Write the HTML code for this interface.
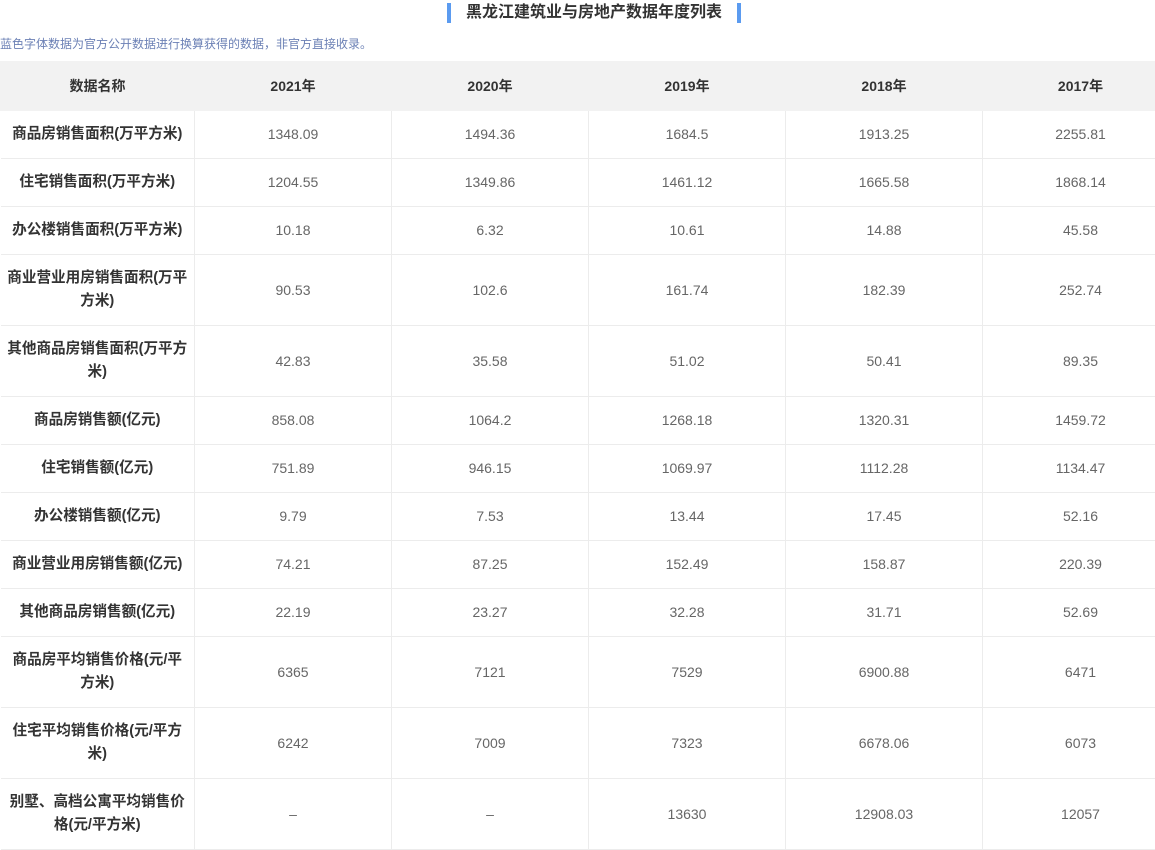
<!DOCTYPE html>
<html><head><meta charset="utf-8"><style>
body{margin:0;background:#fff;font-family:"Liberation Sans","Noto Sans CJK SC",sans-serif;width:1155px;height:846px;overflow:hidden;position:relative}
.title{position:absolute;top:3px;left:447px;width:294px;height:20px;border-left:4px solid #5b9bf0;border-right:4px solid #5b9bf0;box-sizing:border-box;text-align:center;font-size:16px;font-weight:bold;color:#333;line-height:20px}
.note{position:absolute;top:35px;left:0;font-size:12px;color:#6b80b5}
table{position:absolute;top:61px;left:0;border-collapse:collapse;table-layout:fixed;width:1178px}
td,th{border:1px solid #ececec;text-align:center;font-size:14px;color:#666;padding:0 6px;line-height:23px}
th{background:#f2f2f2;height:48px;color:#333;font-weight:bold;border-color:#f2f2f2}
td:first-child{font-weight:bold;color:#333;border-left:none;font-size:14.6px;padding:0 2px;white-space:nowrap;overflow:hidden}
tr.s td{height:47px}
tr.d td{height:70px}
</style></head><body>
<div class="title">黑龙江建筑业与房地产数据年度列表</div>
<div class="note">蓝色字体数据为官方公开数据进行换算获得的数据，非官方直接收录。</div>
<table>
<colgroup><col style="width:194px"><col style="width:197px"><col style="width:197px"><col style="width:197px"><col style="width:197px"><col style="width:196px"></colgroup>
<tr><th>数据名称</th><th>2021年</th><th>2020年</th><th>2019年</th><th>2018年</th><th>2017年</th></tr>
<tr class="s"><td>商品房销售面积(万平方米)</td><td>1348.09</td><td>1494.36</td><td>1684.5</td><td>1913.25</td><td>2255.81</td></tr>
<tr class="s"><td>住宅销售面积(万平方米)</td><td>1204.55</td><td>1349.86</td><td>1461.12</td><td>1665.58</td><td>1868.14</td></tr>
<tr class="s"><td>办公楼销售面积(万平方米)</td><td>10.18</td><td>6.32</td><td>10.61</td><td>14.88</td><td>45.58</td></tr>
<tr class="d"><td>商业营业用房销售面积(万平<br>方米)</td><td>90.53</td><td>102.6</td><td>161.74</td><td>182.39</td><td>252.74</td></tr>
<tr class="d"><td>其他商品房销售面积(万平方<br>米)</td><td>42.83</td><td>35.58</td><td>51.02</td><td>50.41</td><td>89.35</td></tr>
<tr class="s"><td>商品房销售额(亿元)</td><td>858.08</td><td>1064.2</td><td>1268.18</td><td>1320.31</td><td>1459.72</td></tr>
<tr class="s"><td>住宅销售额(亿元)</td><td>751.89</td><td>946.15</td><td>1069.97</td><td>1112.28</td><td>1134.47</td></tr>
<tr class="s"><td>办公楼销售额(亿元)</td><td>9.79</td><td>7.53</td><td>13.44</td><td>17.45</td><td>52.16</td></tr>
<tr class="s"><td>商业营业用房销售额(亿元)</td><td>74.21</td><td>87.25</td><td>152.49</td><td>158.87</td><td>220.39</td></tr>
<tr class="s"><td>其他商品房销售额(亿元)</td><td>22.19</td><td>23.27</td><td>32.28</td><td>31.71</td><td>52.69</td></tr>
<tr class="d"><td>商品房平均销售价格(元/平<br>方米)</td><td>6365</td><td>7121</td><td>7529</td><td>6900.88</td><td>6471</td></tr>
<tr class="d"><td>住宅平均销售价格(元/平方<br>米)</td><td>6242</td><td>7009</td><td>7323</td><td>6678.06</td><td>6073</td></tr>
<tr class="d"><td>别墅、高档公寓平均销售价<br>格(元/平方米)</td><td>–</td><td>–</td><td>13630</td><td>12908.03</td><td>12057</td></tr>
</table>
</body></html>
